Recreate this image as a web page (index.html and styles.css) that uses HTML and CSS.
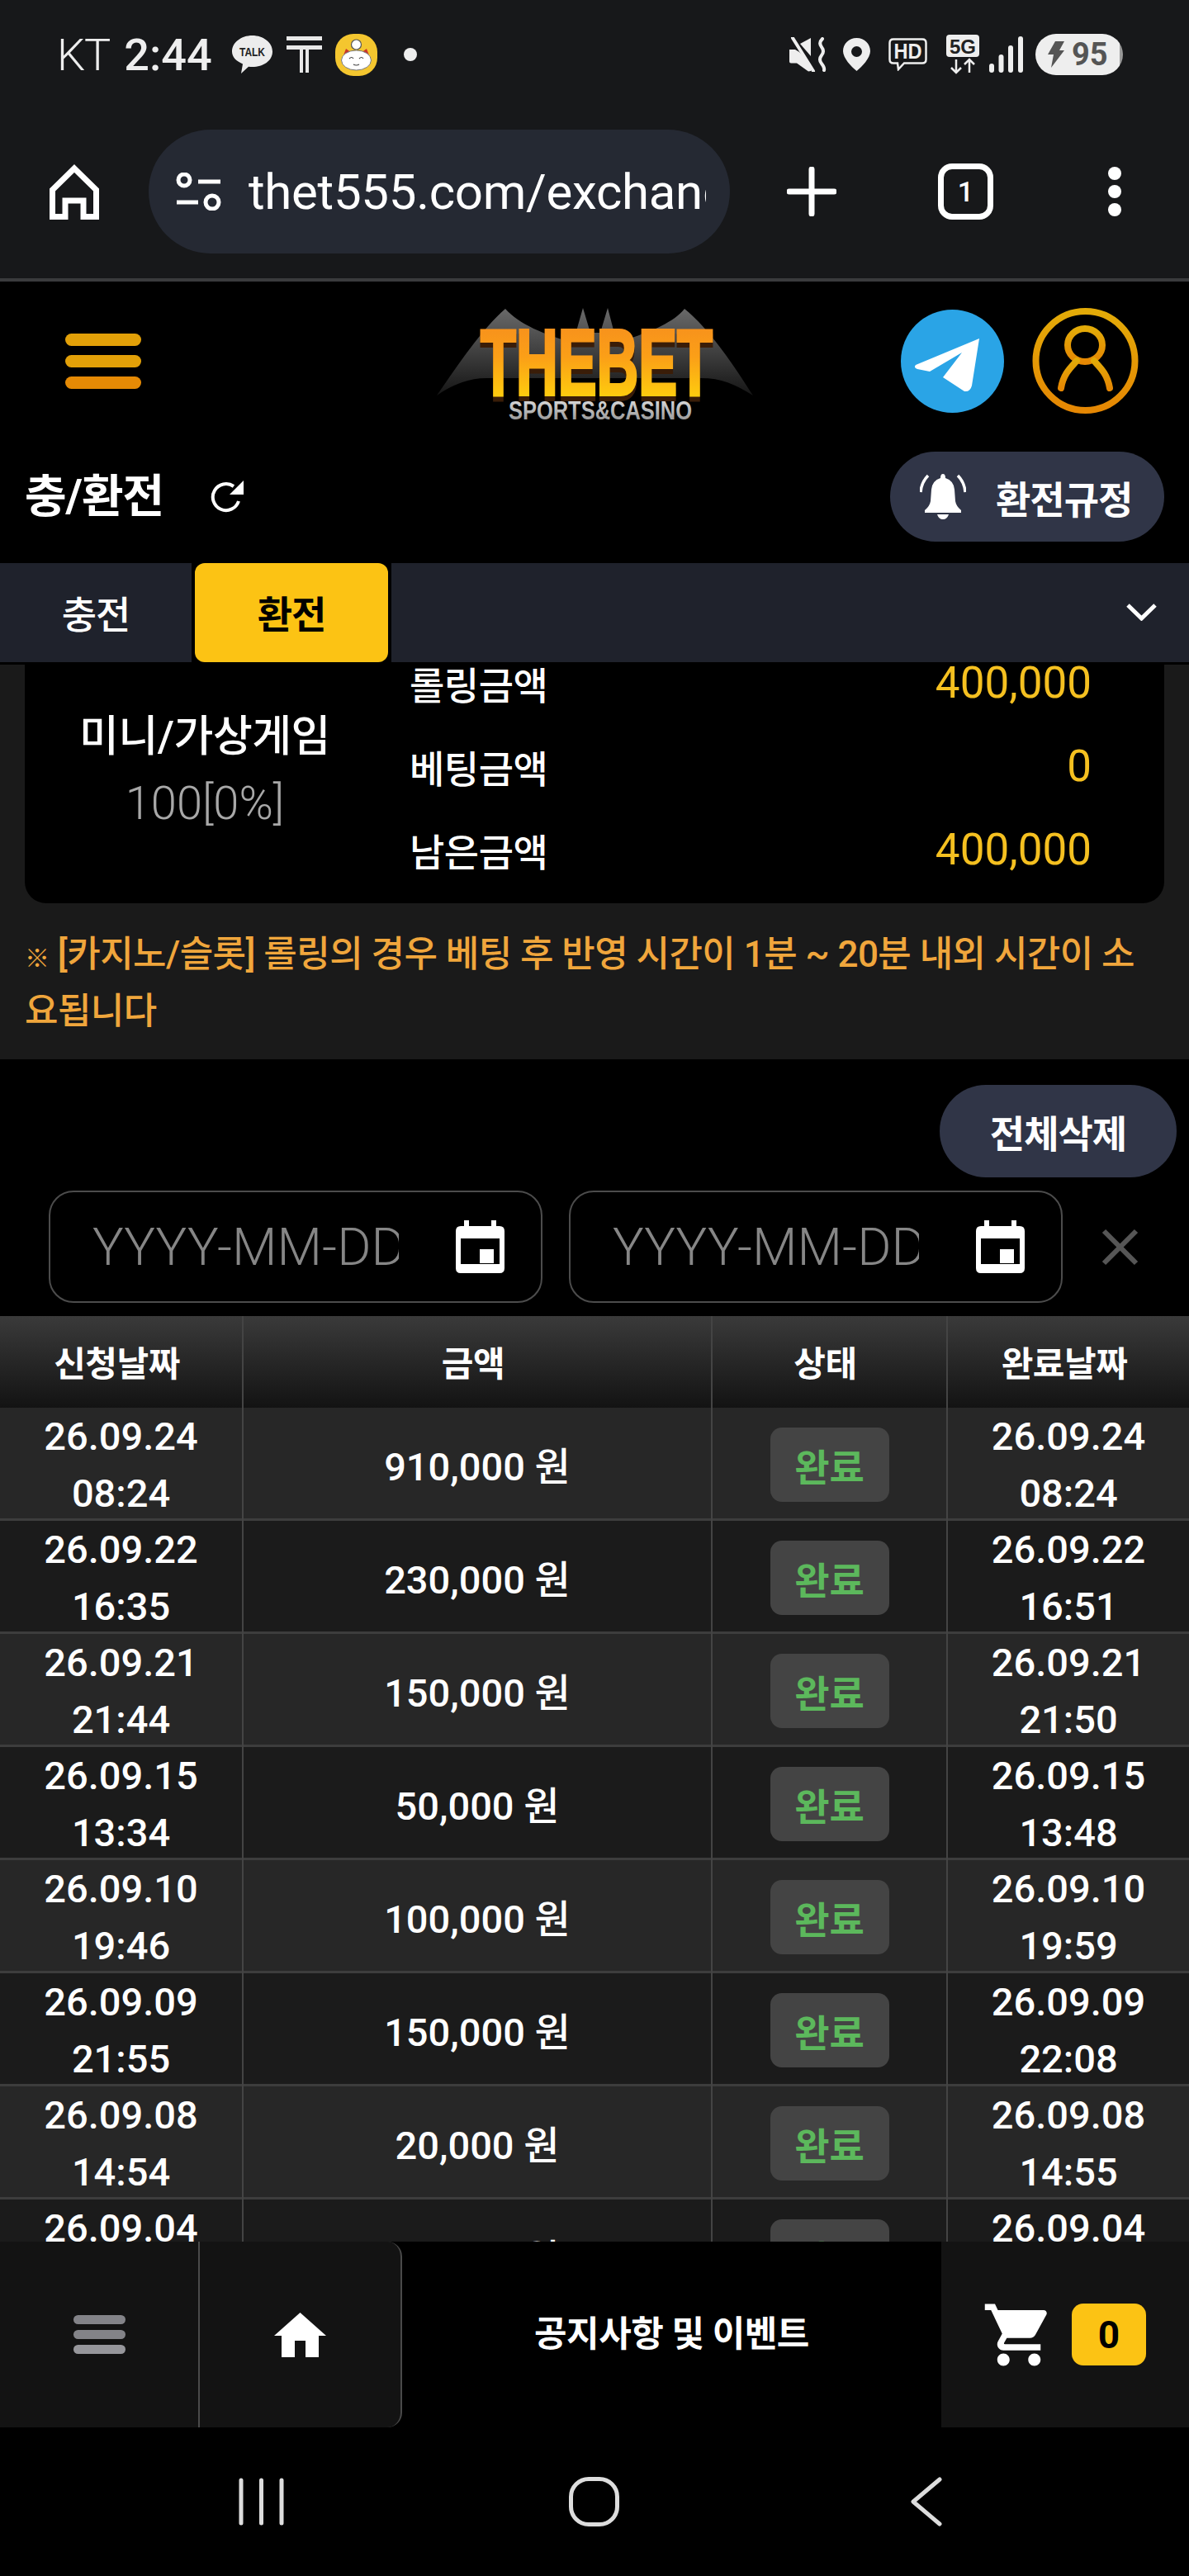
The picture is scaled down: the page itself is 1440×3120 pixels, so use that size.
FILE: index.html
```html
<!DOCTYPE html>
<html lang="ko">
<head>
    <meta charset="UTF-8">
    <meta name="viewport" content="width=device-width, initial-scale=1.0">
    <title>충/환전</title>
    <link rel="stylesheet" href="styles.css">
</head>
<body>
<div class="page">
    <!-- phone status bar and browser toolbar -->
    <div class="chrome">
        <div class="status">
            <span class="carrier">KT</span>
            <span class="clock">2:44</span>
            <svg class="ic-talk" viewBox="0 0 49 46"><path d="M24.500 0C38 0 49 8.500 49 19.500S38 38 24.500 38c-1.500 0-3 0-4.500-.3L11 46l2-11.500C5 31 0 26 0 19.500 0 8.500 11 0 24.500 0z" fill="#ececec"/><text x="24.500" y="25" class="talk-text" textLength="31" lengthAdjust="spacingAndGlyphs">TALK</text></svg>
            <svg class="ic-t" viewBox="0 0 43 44"><path d="M0 0h43v5H0zM0 11h43v5H0zM16 11h4v33h-4zM23 11h4v33h-4z" fill="#e8e8e8"/></svg>
            <svg class="ic-cat" viewBox="0 0 51 51"><rect width="51" height="51" rx="22" fill="#f4c62f"/><circle cx="25.500" cy="13" r="6" fill="#fff" stroke="#555" stroke-width="1.200"/><path d="M10 26l3-8 7 5zM41 26l-3-8-7 5z" fill="#c8352a"/><ellipse cx="25.500" cy="32" rx="18" ry="12" fill="#fff" stroke="#777"/><path d="M17 30q3-3 5 0M29 30q3-3 5 0M22 37q3.500 2 7 0" stroke="#444" stroke-width="1.200" fill="none"/></svg>
            <span class="status-dot"></span>
            <div class="status-right">
                <svg class="ic-mute" viewBox="0 0 45 42"><path d="M0 15h7l5 3 14 15v8l-3 .5-14-10H2q-2 0-2-2z" fill="#eee"/><path d="M13 8l13-7v22z" fill="#eee"/><path d="M4 1l25 40" stroke="#eee" stroke-width="4" stroke-linecap="round"/><path d="M40 2q-5 5-1 10t0 10 0 10 3 8" stroke="#eee" stroke-width="4" fill="none" stroke-linecap="round"/></svg>
                <svg class="ic-pin" viewBox="0 0 33 40"><path fill-rule="evenodd" d="M16.500 0C26 0 33 7 33 16c0 8-10 19-16.500 24C10 35 0 24 0 16 0 7 7 0 16.500 0zm0 10a6.500 6.500 0 1 0 0 13 6.500 6.500 0 0 0 0-13z" fill="#eee"/></svg>
                <svg class="ic-hd" viewBox="0 0 47 40"><path d="M6 1.500h35q4.500 0 4.500 4.500v20q0 4.500-4.500 4.500H19L12 38l-1-7.500H6q-4.500 0-4.500-4.500V6Q1.500 1.500 6 1.500z" fill="none" stroke="#eee" stroke-width="2.500"/><text x="23.500" y="25" class="hd-text" textLength="34" lengthAdjust="spacingAndGlyphs">HD</text></svg>
                <svg class="ic-5g" viewBox="0 0 40 48"><rect width="40" height="27" rx="4" fill="#eee"/><text x="20" y="23" class="fiveg-text" textLength="32" lengthAdjust="spacingAndGlyphs">5G</text><path d="M12 30v16M6 40l6 6 6-6M28 46V30M22 36l6-6 6 6" stroke="#eee" stroke-width="2.500" fill="none"/></svg>
                <svg class="ic-signal" viewBox="0 0 41 44"><rect x="0" y="33" width="6" height="11" rx="3" fill="#eee"/><rect x="11.500" y="22" width="6" height="22" rx="3" fill="#eee"/><rect x="23" y="11" width="6" height="33" rx="3" fill="#eee"/><rect x="35" y="0" width="6" height="44" rx="3" fill="#eee"/></svg>
                <div class="battery">
                    <svg class="ic-bolt" viewBox="0 0 20 32"><path d="M9 0h11l-6 11h6L4 32l3-16H0z" fill="#555"/></svg>
                    <span>95</span>
                </div>
            </div>
        </div>
        <div class="toolbar">
            <svg class="ic-home" viewBox="0 0 60 67"><path d="M30 5L56.500 31V63.500H41V44H19V63.500H3.500V31z" fill="none" stroke="#fff" stroke-width="7"/></svg>
            <div class="url-pill">
                <svg class="ic-tune" viewBox="0 0 56 46"><circle cx="10" cy="9" r="7" fill="none" stroke="#fff" stroke-width="5"/><path d="M27 11h27M1 36h26" stroke="#fff" stroke-width="5"/><circle cx="44" cy="36" r="8" fill="none" stroke="#fff" stroke-width="5"/></svg>
                <span class="url-text">thet555.com/exchange</span>
            </div>
            <svg class="ic-plus" viewBox="0 0 60 60"><path d="M30 3v54M3 30h54" stroke="#fff" stroke-width="7" stroke-linecap="round"/></svg>
            <div class="tab-count">1</div>
            <svg class="ic-dots" viewBox="0 0 16 60"><circle cx="8" cy="8" r="8" fill="#fff"/><circle cx="8" cy="30" r="8" fill="#fff"/><circle cx="8" cy="52" r="8" fill="#fff"/></svg>
        </div>
    </div>

    <!-- site header -->
    <div class="site-top">
        <div class="burger"><span></span><span></span><span></span></div>
        <svg class="logo" viewBox="0 0 383 136">
            <defs>
                <linearGradient id="wing" x1="0" y1="0" x2="0" y2="1"><stop offset="0" stop-color="#6a6a6a"/><stop offset="1" stop-color="#151515"/></linearGradient>
                <linearGradient id="gold" x1="0" y1="0" x2="0" y2="1"><stop offset="0" stop-color="#f58a1f"/><stop offset=".45" stop-color="#fb9f17"/><stop offset="1" stop-color="#ffe00a"/></linearGradient>
                <linearGradient id="steel" x1="0" y1="0" x2="0" y2="1"><stop offset="0" stop-color="#e4e4e4"/><stop offset="1" stop-color="#8a8a8a"/></linearGradient>
            </defs>
            <path d="M0 106C25 70 55 25 83 1C100 20 130 32 165 42L177 0L186 30H198L207 0L218 42C250 32 285 20 300 1C330 25 360 70 383 106C360 92 345 85 320 85L60 85C40 85 20 92 0 106Z" fill="url(#wing)"/>
            <text x="53" y="105" class="logo-main" textLength="281" lengthAdjust="spacingAndGlyphs">THEBET</text>
            <text x="87" y="135" class="logo-sub" textLength="222" lengthAdjust="spacingAndGlyphs">SPORTS&amp;CASINO</text>
        </svg>
        <div class="top-actions">
            <svg class="ic-telegram" viewBox="0 0 125 125"><circle cx="62.500" cy="62.500" r="62.500" fill="#2aa4e6"/><path d="M95 35L18 67Q15 70 20 72L35 75L74 52L51 82L77 99Q84 100 86 92Z" fill="#fff"/></svg>
            <svg class="ic-user" viewBox="0 0 129 130">
                <defs><linearGradient id="ring" x1="0" y1="0" x2="0" y2="1"><stop offset="0" stop-color="#e3ab08"/><stop offset="1" stop-color="#e58703"/></linearGradient></defs>
                <circle cx="64.500" cy="65" r="60" fill="none" stroke="url(#ring)" stroke-width="8"/>
                <ellipse cx="64" cy="46" rx="21" ry="20" fill="none" stroke="url(#ring)" stroke-width="8"/>
                <path d="M35 98C38 80 48 72 54 65M94 98C91 80 81 72 75 65" fill="none" stroke="url(#ring)" stroke-width="8" stroke-linecap="round"/>
            </svg>
        </div>
    </div>
    <div class="title-row">
        <h1 class="page-title">충/환전</h1>
        <svg class="ic-refresh" viewBox="0 0 42 39"><path d="M35 25A16 16 0 1 1 29 7" fill="none" stroke="#fff" stroke-width="4"/><path d="M41 0V17H24z" fill="#fff"/></svg>
        <div class="rule-btn">
            <svg class="ic-bell" viewBox="0 0 56 55"><path d="M28 0q3 0 3 5 10 3 11 14l1 14q1 6 7 11v3H6v-3q6-5 7-11l1-14Q15 8 25 5q0-5 3-5z" fill="#fff"/><path d="M21 49h14q-2 6-7 6t-7-6z" fill="#fff"/><path d="M10 2Q2 10 1 22M46 2q8 8 9 20" fill="none" stroke="#fff" stroke-width="3.500"/></svg>
            <span>환전규정</span>
        </div>
    </div>

    <div class="tabs">
        <div class="tab">충전</div>
        <div class="tab tab-active">환전</div>
        <div class="tab tab-rest">
            <svg class="ic-chevron" viewBox="0 0 39 22"><path d="M3 3l16.500 16L36 3" fill="none" stroke="#fff" stroke-width="5"/></svg>
        </div>
    </div>

    <!-- scrolled content, clipped by the tabs and the bottom bar -->
    <div class="content">
        <div class="summary">
            <div class="panel">
                <div class="panel-inner">
                    <div class="game">
                        <div class="game-name">미니/가상게임</div>
                        <div class="game-rate">100[0%]</div>
                    </div>
                    <div class="stats">
                        <div class="stat"><span>롤링금액</span><span class="stat-val">400,000</span></div>
                        <div class="stat"><span>베팅금액</span><span class="stat-val">0</span></div>
                        <div class="stat"><span>남은금액</span><span class="stat-val">400,000</span></div>
                    </div>
                </div>
            </div>
            <p class="notice"><span class="notice-mark">※</span> [카지노/슬롯] 롤링의 경우 베팅 후 반영 시간이 1분 ~ 20분 내외 시간이 소<br>요됩니다</p>
        </div>

        <div class="del-row"><div class="del-btn">전체삭제</div></div>

        <div class="filters">
            <div class="date-box">
                <span class="date-ph">YYYY-MM-DD</span>
                <svg class="ic-cal" viewBox="0 0 59 64"><path d="M10 0h6v7h27V0h6v7h4q6 0 6 6v45q0 6-6 6H6q-6 0-6-6V13q0-6 6-6h4z" fill="#fff"/><rect x="6" y="22" width="47" height="31" fill="#000"/><rect x="29" y="35" width="17" height="17" fill="#fff"/></svg>
            </div>
            <div class="date-box">
                <span class="date-ph">YYYY-MM-DD</span>
                <svg class="ic-cal" viewBox="0 0 59 64"><path d="M10 0h6v7h27V0h6v7h4q6 0 6 6v45q0 6-6 6H6q-6 0-6-6V13q0-6 6-6h4z" fill="#fff"/><rect x="6" y="22" width="47" height="31" fill="#000"/><rect x="29" y="35" width="17" height="17" fill="#fff"/></svg>
            </div>
            <svg class="ic-x" viewBox="0 0 45 45"><path d="M3 3l39 39M42 3L3 42" stroke="#565656" stroke-width="6"/></svg>
        </div>

        <div class="table">
            <div class="thead">
                <div class="cell">신청날짜</div>
                <div class="cell">금액</div>
                <div class="cell">상태</div>
                <div class="cell">완료날짜</div>
            </div>
            <div class="row">
                <div class="cell date">26.09.24<br>08:24</div>
                <div class="cell amount">910,000 원</div>
                <div class="cell"><span class="badge">완료</span></div>
                <div class="cell date">26.09.24<br>08:24</div>
            </div>
            <div class="row">
                <div class="cell date">26.09.22<br>16:35</div>
                <div class="cell amount">230,000 원</div>
                <div class="cell"><span class="badge">완료</span></div>
                <div class="cell date">26.09.22<br>16:51</div>
            </div>
            <div class="row">
                <div class="cell date">26.09.21<br>21:44</div>
                <div class="cell amount">150,000 원</div>
                <div class="cell"><span class="badge">완료</span></div>
                <div class="cell date">26.09.21<br>21:50</div>
            </div>
            <div class="row">
                <div class="cell date">26.09.15<br>13:34</div>
                <div class="cell amount">50,000 원</div>
                <div class="cell"><span class="badge">완료</span></div>
                <div class="cell date">26.09.15<br>13:48</div>
            </div>
            <div class="row">
                <div class="cell date">26.09.10<br>19:46</div>
                <div class="cell amount">100,000 원</div>
                <div class="cell"><span class="badge">완료</span></div>
                <div class="cell date">26.09.10<br>19:59</div>
            </div>
            <div class="row">
                <div class="cell date">26.09.09<br>21:55</div>
                <div class="cell amount">150,000 원</div>
                <div class="cell"><span class="badge">완료</span></div>
                <div class="cell date">26.09.09<br>22:08</div>
            </div>
            <div class="row">
                <div class="cell date">26.09.08<br>14:54</div>
                <div class="cell amount">20,000 원</div>
                <div class="cell"><span class="badge">완료</span></div>
                <div class="cell date">26.09.08<br>14:55</div>
            </div>
            <div class="row">
                <div class="cell date">26.09.04<br>11:20</div>
                <div class="cell amount">20,000 원</div>
                <div class="cell"><span class="badge">완료</span></div>
                <div class="cell date">26.09.04<br>11:32</div>
            </div>
        </div>
    </div>

    <div class="bottom-bar">
        <div class="bb-left">
            <div class="bb-menu"><div class="burger burger-gray"><span></span><span></span><span></span></div></div>
            <div class="bb-home">
                <svg class="ic-house" viewBox="0 0 63 54"><path d="M31.500 0L63 28H54V54H38V34H25V54H9V28H0Z" fill="#fff"/></svg>
            </div>
        </div>
        <div class="bb-notice">공지사항 및 이벤트</div>
        <div class="bb-cart">
            <svg class="ic-cart" viewBox="0 0 24 24"><path d="M7 18c-1.100 0-1.990.9-1.990 2S5.900 22 7 22s2-.9 2-2-.9-2-2-2zM1 2v2h2l3.600 7.590-1.350 2.450c-.16.28-.25.61-.25.96 0 1.100.9 2 2 2h12v-2H7.420c-.14 0-.25-.11-.25-.25l.03-.12.9-1.630h7.450c.75 0 1.410-.41 1.750-1.030l3.580-6.490c.08-.14.12-.31.12-.48 0-.55-.45-1-1-1H5.210l-.94-2H1zm16 16c-1.100 0-1.990.9-1.990 2s.89 2 1.990 2 2-.9 2-2-.9-2-2-2z" fill="#fff"/></svg>
            <span class="cart-count">0</span>
        </div>
    </div>

    <!-- android nav bar -->
    <div class="navbar">
        <svg class="ic-recents" viewBox="0 0 55 58"><path d="M3 3v52M27.500 3v52M52 3v52" stroke="#ddd" stroke-width="5" stroke-linecap="round"/></svg>
        <span class="nav-home"></span>
        <svg class="ic-back" viewBox="0 0 38 60"><path d="M35 3L3 30l32 27" fill="none" stroke="#ddd" stroke-width="5" stroke-linecap="round" stroke-linejoin="round"/></svg>
    </div>
</div>
</body>
</html>
```

FILE: styles.css
```css
* { box-sizing: border-box; }
html, body { margin: 0; padding: 0; background: #000; }
body { font-family: Roboto, "Noto Sans CJK KR", sans-serif; color: #fff; }
svg { display: block; flex: none; }
.page { width: 1440px; height: 3120px; display: flex; flex-direction: column; overflow: hidden; }

/* status bar */
.chrome { height: 341px; flex: none; background: #17181a; border-bottom: 4px solid #3a3b3d; }
.status { height: 132px; display: flex; align-items: center; padding-left: 69px; color: #eee; font-size: 54px; }
.carrier { font-weight: 300; letter-spacing: -1px; }
.clock { font-weight: 500; margin-left: 17px; }
.ic-talk { width: 49px; height: 46px; margin-left: 24px; }
.talk-text { font: 700 15px "Liberation Sans", sans-serif; fill: #222; text-anchor: middle; }
.ic-t { width: 43px; height: 44px; margin-left: 17px; }
.ic-cat { width: 51px; height: 51px; margin-left: 16px; }
.status-dot { width: 16px; height: 16px; border-radius: 50%; background: #eee; margin-left: 32px; }
.status-right { margin-left: auto; margin-right: 80px; display: flex; align-items: center; }
.ic-mute { width: 45px; height: 42px; }
.ic-pin { width: 33px; height: 40px; margin-left: 20px; }
.ic-hd { width: 47px; height: 40px; margin-left: 22px; }
.hd-text { font: 700 25px "Liberation Sans", sans-serif; fill: #eee; text-anchor: middle; }
.ic-5g { width: 40px; height: 48px; margin-left: 23px; }
.fiveg-text { font: 700 24px "Liberation Sans", sans-serif; fill: #222; text-anchor: middle; }
.ic-signal { width: 41px; height: 44px; margin-left: 12px; }
.battery { width: 106px; height: 50px; margin-left: 15px; border-radius: 25px; display: flex; align-items: center; padding-left: 15px; background: linear-gradient(90deg, #eee 96%, #999 96%); color: #555; font-size: 38px; font-weight: 700; }
.ic-bolt { width: 20px; height: 32px; margin-right: 9px; }

/* browser toolbar */
.toolbar { height: 200px; display: flex; align-items: center; padding-left: 60px; }
.ic-home { width: 60px; height: 67px; }
.url-pill { width: 704px; height: 150px; margin-left: 60px; border-radius: 75px; background: #252933; display: flex; align-items: center; padding-left: 33px; }
.ic-tune { width: 56px; height: 46px; }
.url-text { display: block; width: 554px; margin-left: 32px; overflow: hidden; white-space: nowrap; font-size: 60px; letter-spacing: -.3px; }
.ic-plus { width: 60px; height: 60px; margin-left: 69px; }
.tab-count { width: 67px; height: 68px; margin-left: 123px; border: 7px solid #fff; border-radius: 17px; display: flex; align-items: center; justify-content: center; font-size: 34px; font-weight: 500; }
.ic-dots { width: 16px; height: 60px; margin-left: 139px; }

/* site header */
.site-top { height: 192px; flex: none; display: grid; grid-template-columns: 1fr 383px 1fr; align-items: center; }
.burger { width: 92px; margin-left: 79px; display: flex; flex-direction: column; gap: 11px; }
.burger span { display: block; height: 15px; border-radius: 8px; background: #e2a008; }
.burger span:nth-child(3) { background: #e58a05; }
.logo { width: 383px; height: 136px; margin-top: 7px; overflow: visible; }
.logo-main { font: 700 114px "Liberation Sans", sans-serif; fill: url(#gold); stroke: url(#gold); stroke-width: 4px; filter: drop-shadow(0 6px 0 #3a1d08); }
.logo-sub { font: 700 31px "Liberation Sans", sans-serif; fill: url(#steel); }
.top-actions { display: flex; justify-content: flex-end; align-items: center; gap: 34px; padding-right: 61px; }
.ic-telegram { width: 125px; height: 125px; }
.ic-user { width: 129px; height: 130px; }

.title-row { height: 149px; flex: none; display: flex; align-items: center; padding: 0 30px 12px; }
.page-title { margin: 0; font-size: 55px; font-weight: 700; letter-spacing: -1px; line-height: 1; }
.ic-refresh { width: 42px; height: 39px; margin-left: 56px; }
.rule-btn { margin-left: auto; width: 332px; height: 109px; border-radius: 55px; background: #303547; display: flex; align-items: center; padding-left: 36px; font-size: 46px; font-weight: 700; letter-spacing: -1px; }
.rule-btn span { margin-left: 36px; }
.ic-bell { width: 56px; height: 55px; }

.tabs { height: 120px; flex: none; display: flex; gap: 4px; font-size: 46px; font-weight: 500; letter-spacing: -1px; }
.tab { width: 232px; background: #1f222c; display: flex; align-items: center; justify-content: center; padding-bottom: 2px; }
.tab-active { width: 234px; background: #fcc314; color: #000; border-radius: 12px; font-weight: 700; }
.tab-rest { flex: 1; justify-content: flex-end; padding-right: 38px; }
.ic-chevron { width: 39px; height: 22px; }

/* content */
.content { flex: 1; min-height: 0; overflow: hidden; }
.summary { background: #1a1a1a; border-top: 3px solid #000; padding: 0 30px 30px; height: 481px; }
.panel { height: 289px; background: #000; border-radius: 0 0 26px 26px; overflow: hidden; }
.panel-inner { margin-top: -29px; display: grid; grid-template-columns: 436px 1fr; align-items: center; }
.game { text-align: center; padding-top: 11px; }
.game-name { font-size: 52px; line-height: 80px; font-weight: 500; letter-spacing: -.5px; }
.game-rate { font-size: 56px; line-height: 80px; font-weight: 300; color: #a8a8a8; }
.stats { padding: 0 88px 0 30px; }
.stat { height: 101px; display: flex; justify-content: space-between; align-items: center; font-size: 46px; font-weight: 500; letter-spacing: -.5px; }
.stat-val { font-size: 53px; font-weight: 400; color: #f5c020; letter-spacing: 0; }
.notice { margin: 30px 0 0; font-size: 44px; line-height: 65px; font-weight: 500; color: #f0a63c; letter-spacing: -.55px; white-space: nowrap; }
.notice-mark { font-size: 30px; }

.del-row { display: flex; justify-content: flex-end; padding: 31px 15px 0 0; }
.del-btn { width: 287px; height: 112px; border-radius: 56px; background: #303547; display: flex; align-items: center; justify-content: center; font-size: 46px; font-weight: 700; letter-spacing: -1px; }

.filters { display: flex; align-items: center; padding: 16px 0 0 59px; gap: 32px; }
.date-box { width: 598px; height: 136px; border: 2px solid #4c4c4c; border-radius: 30px; display: flex; align-items: center; padding-left: 51px; }
.date-ph { width: 371px; overflow: hidden; white-space: nowrap; font-size: 63px; font-weight: 300; color: #868686; }
.ic-cal { width: 59px; height: 64px; margin-left: 69px; }
.ic-x { width: 45px; height: 45px; margin-left: 15px; }

/* history table */
.table { margin-top: 16px; font-size: 47px; font-weight: 500; }
.thead, .row { display: grid; grid-template-columns: 293px 568px 285px 294px; }
.thead { height: 111px; background: linear-gradient(#3a3a3a, #131313); font-size: 42px; font-weight: 700; letter-spacing: -.5px; }
.thead .cell { padding: 0 10px 2px 0; }
.row { height: 137px; border-bottom: 3px solid #3d3d3d; background: #272727; }
.row:nth-child(odd) { background: #1b1b1b; }
.cell { display: flex; align-items: center; justify-content: center; text-align: center; border-left: 2px solid #444; }
.cell:first-child { border-left: 0; }
.date { display: block; line-height: 69px; }
.amount { padding-bottom: 3px; }
.badge { width: 144px; height: 90px; border-radius: 14px; background: #444; color: #5cb85c; display: flex; align-items: center; justify-content: center; font-size: 46px; font-weight: 700; }

/* bottom bar */
.bottom-bar { height: 225px; flex: none; display: flex; background: #000; }
.bb-left { width: 487px; display: flex; background: #131313; border-right: 2px solid #4a4a4a; border-radius: 0 18px 18px 0; }
.bb-menu { width: 242px; border-right: 2px solid #4a4a4a; display: flex; align-items: center; }
.burger-gray { width: 63px; margin-left: 89px; gap: 7px; }
.burger-gray span { height: 11px; background: #838388; }
.burger-gray span:nth-child(3) { background: #96969b; }
.bb-home { flex: 1; display: flex; align-items: center; justify-content: center; }
.ic-house { width: 63px; height: 54px; }
.bb-notice { width: 653px; display: flex; align-items: center; justify-content: center; font-size: 43px; font-weight: 700; letter-spacing: -.5px; padding-bottom: 10px; }
.bb-cart { flex: 1; background: #131313; display: flex; align-items: center; padding-left: 49px; }
.ic-cart { width: 90px; height: 90px; }
.cart-count { width: 90px; height: 75px; margin-left: 19px; border-radius: 14px; background: #fcc314; color: #000; display: flex; align-items: center; justify-content: center; font-size: 46px; font-weight: 700; }

/* nav bar */
.navbar { height: 180px; flex: none; background: #000; display: flex; align-items: center; padding-left: 289px; }
.ic-recents { width: 55px; height: 58px; }
.nav-home { width: 61px; height: 60px; border: 5px solid #ddd; border-radius: 24px; margin-left: 345px; }
.ic-back { width: 38px; height: 60px; margin-left: 353px; }
```
